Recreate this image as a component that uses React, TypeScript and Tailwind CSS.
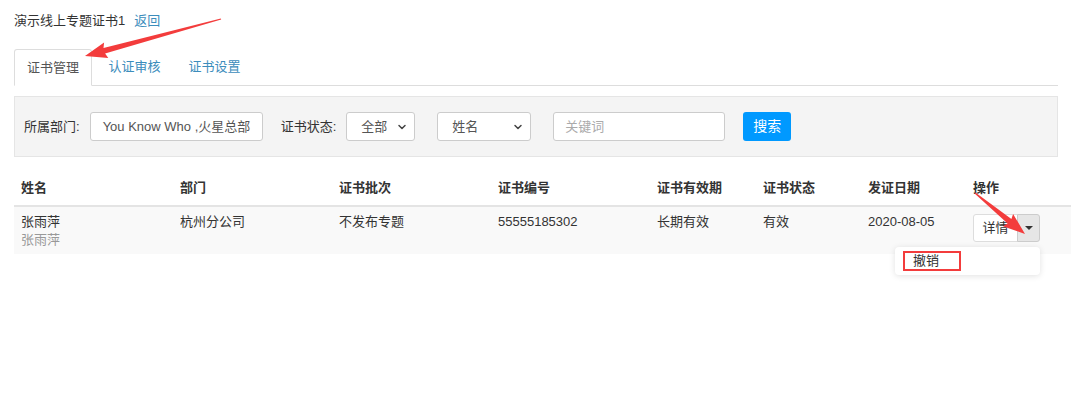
import { ChevronDown } from 'lucide-react';

const font = { fontFamily: '"Liberation Sans", "Noto Sans CJK SC", sans-serif' };

const cols = [
  { label: '姓名', w: 'w-[159px]' },
  { label: '部门', w: 'w-[159px]' },
  { label: '证书批次', w: 'w-[159px]' },
  { label: '证书编号', w: 'w-[159px]' },
  { label: '证书有效期', w: 'w-[106px]' },
  { label: '证书状态', w: 'w-[105px]' },
  { label: '发证日期', w: 'w-[105px]' },
  { label: '操作', w: 'w-[105px]' },
];

const Arrow = ({ x1, y1, x2, y2 }: { x1: number; y1: number; x2: number; y2: number }) => {
  const dx = x2 - x1;
  const dy = y2 - y1;
  const len = Math.sqrt(dx * dx + dy * dy);
  const ux = dx / len;
  const uy = dy / len;
  const px = -uy;
  const py = ux;
  const hb = 22; // head length
  const bx = x2 - ux * hb;
  const by = y2 - uy * hb;
  const pts = [
    [x1 + px * 0.6, y1 + py * 0.6],
    [bx + ux * 2 + px * 3, by + uy * 2 + py * 3],
    [bx + px * 8, by + py * 8],
    [x2, y2],
    [bx - px * 8, by - py * 8],
    [bx + ux * 2 - px * 3, by + uy * 2 - py * 3],
    [x1 - px * 0.6, y1 - py * 0.6],
  ]
    .map((p) => p.map((v) => v.toFixed(1)).join(','))
    .join(' ');
  return <polygon points={pts} fill="#f33c3c" />;
};

export default function App() {
  return (
    <div className="relative w-[1072px] h-[393px] bg-white text-[13px] text-[#333]" style={font}>
      <div className="px-[14px] pt-[12px]">
        <div className="flex items-center h-[18px] gap-[9px]">
          <span>演示线上专题证书1</span>
          <a className="text-[#3c8dbc]">返回</a>
        </div>

        {/* tabs */}
        <div className="mt-[19px] flex border-b border-[#ddd] h-[37px]">
          <div className="w-[78px] h-[37px] -mb-px border border-[#ddd] border-b-white bg-white rounded-t-[3px] flex items-center justify-center text-[#555]">
            证书管理
          </div>
          <div className="w-[85px] flex items-center justify-center text-[#3c8dbc]">认证审核</div>
          <div className="w-[75px] flex items-center justify-center text-[#3c8dbc]">证书设置</div>
        </div>

        {/* filters */}
        <div className="mt-[10px] h-[61px] bg-[#f4f4f4] border border-[#e5e5e5] flex items-center pl-[9px]">
          <span className="text-[#333]">所属部门:</span>
          <div className="ml-[10px] w-[173px] h-[29px] bg-white border border-[#ccc] rounded-[3px] flex items-center px-[12px] text-[#555] whitespace-nowrap overflow-hidden">
            You Know Who ,火星总部
          </div>
          <span className="ml-[18px]">证书状态:</span>
          <div className="ml-[10px] w-[69px] h-[29px] bg-white border border-[#ccc] rounded-[3px] flex items-center justify-between pl-[14px] pr-[6px] text-[#555]">
            全部 <ChevronDown size={12} strokeWidth={3} className="text-[#444]" />
          </div>
          <div className="ml-[22px] w-[94px] h-[29px] bg-white border border-[#ccc] rounded-[3px] flex items-center justify-between pl-[14px] pr-[6px] text-[#555]">
            姓名 <ChevronDown size={12} strokeWidth={3} className="text-[#444]" />
          </div>
          <div className="ml-[22px] w-[172px] h-[29px] bg-white border border-[#ccc] rounded-[3px] flex items-center px-[11px] text-[#aaa]">
            关键词
          </div>
          <button className="ml-[18px] w-[48px] h-[29px] bg-[#0099ff] text-white rounded-[3px] text-[14px]">
            搜索
          </button>
        </div>

        {/* table */}
        <table className="mt-[13px] w-[1057px] border-collapse table-fixed">
          <thead>
            <tr className="h-[36px] border-b-2 border-[#e4e4e4]">
              {cols.map((c) => (
                <th key={c.label} className={`${c.w} text-left font-bold pl-[7px] align-middle text-[#333]`}>
                  {c.label}
                </th>
              ))}
            </tr>
          </thead>
          <tbody>
            <tr className="h-[48px] bg-[#f9f9f9] align-top">
              <td className="pl-[7px] pt-[6px] leading-[18px]">
                <div>张雨萍</div>
                <div className="text-[#999]">张雨萍</div>
              </td>
              <td className="pl-[7px] pt-[6px] leading-[18px]">杭州分公司</td>
              <td className="pl-[7px] pt-[6px] leading-[18px]">不发布专题</td>
              <td className="pl-[7px] pt-[6px] leading-[18px]">55555185302</td>
              <td className="pl-[7px] pt-[6px] leading-[18px]">长期有效</td>
              <td className="pl-[7px] pt-[6px] leading-[18px]">有效</td>
              <td className="pl-[7px] pt-[6px] leading-[18px]">2020-08-05</td>
              <td className="pl-[7px] pt-[7px]">
                <div className="flex h-[28px]">
                  <div className="w-[45px] border border-[#ddd] bg-white rounded-l-[3px] flex items-center justify-center text-[#333]">
                    详情
                  </div>
                  <div className="w-[23px] -ml-px border border-[#ccc] bg-[#e6e6e6] rounded-r-[3px] flex items-center justify-center">
                    <span className="block w-0 h-0 border-l-[4px] border-r-[4px] border-t-[4px] border-l-transparent border-r-transparent border-t-[#333]" />
                  </div>
                </div>
              </td>
            </tr>
          </tbody>
        </table>
      </div>

      {/* dropdown menu */}
      <div className="absolute left-[895px] top-[247px] w-[145px] h-[28px] bg-white rounded-[4px] shadow-[0_1px_6px_rgba(0,0,0,0.12)] flex items-center pl-[8px]">
        <div className="w-[58px] h-[20px] border-2 border-[#f33c3c] flex items-center pl-[8px] text-[#333]">撤销</div>
      </div>

      {/* annotation arrows */}
      <svg className="absolute left-0 top-0 pointer-events-none" width="1072" height="393">
        <Arrow x1={221} y1={19} x2={85} y2={56} />
        <Arrow x1={975} y1={193} x2={1025} y2={234} />
      </svg>
    </div>
  );
}
